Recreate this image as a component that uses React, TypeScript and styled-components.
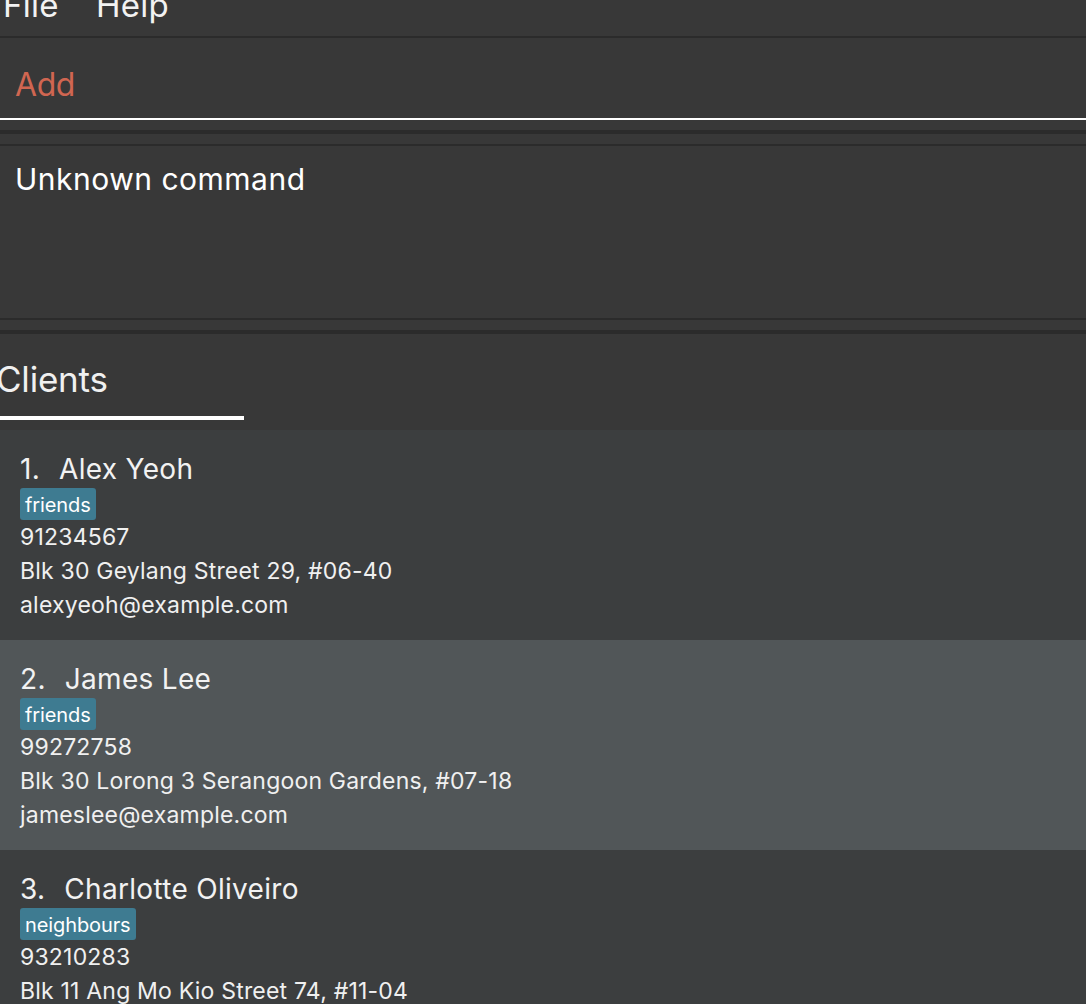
import React from "react";
import styled, { createGlobalStyle } from "styled-components";

const Global = createGlobalStyle`
  html, body { margin: 0; padding: 0; background: #383838; }
  body { font-family: Inter, "Open Sans", sans-serif; color: #ffffff; overflow: hidden; }
  * { box-sizing: border-box; }
`;

const Window = styled.div`
  width: 1086px;
  height: 1004px;
  background: #383838;
  display: flex;
  flex-direction: column;
  overflow: hidden;
  & > * { flex-shrink: 0; }
`;

const MenuBar = styled.div`
  height: 38px;
  display: flex;
  gap: 37px;
  padding-left: 3px;
  border-bottom: 2px solid #2b2b2b;
  overflow: hidden;
`;

const MenuItem = styled.span`
  font-size: 33px;
  line-height: 33px;
  margin-top: -11px;
  letter-spacing: 0.3px;
  color: #f2f2f2;
`;

const CommandBox = styled.div`
  height: 82px;
  display: flex;
  align-items: flex-start;
  padding: 27px 15px 0;
  border-bottom: 2px solid #ffffff;
`;

const CommandText = styled.span<{ $error?: boolean }>`
  font-size: 32px;
  line-height: 40px;
  letter-spacing: -0.4px;
  color: ${(p) => (p.$error ? "#d06651" : "#ffffff")};
`;

const Separator = styled.div<{ $thick?: boolean }>`
  height: ${(p) => (p.$thick ? 4 : 2)}px;
  background: #2b2b2b;
`;

const Gap = styled.div`
  height: 10px;
`;

const ResultDisplay = styled.div`
  height: 172px;
  padding: 15px 15px 0;
  font-size: 30px;
  line-height: 36px;
  letter-spacing: 0.5px;
  color: #ffffff;
`;

const ListPanel = styled.div`
  flex: 1;
  display: flex;
  flex-direction: column;
  min-height: 0;
`;

const ListHeader = styled.div`
  height: 96px;
  padding-top: 25px;
  display: flex;
  flex-direction: column;
  flex-shrink: 0;
`;

const HeaderTitle = styled.div`
  font-size: 35px;
  line-height: 40px;
  letter-spacing: -0.2px;
  margin-left: -4px;
  color: #f0f0f0;
`;

const HeaderUnderline = styled.div`
  width: 244px;
  height: 4px;
  margin-top: 17px;
  background: #ffffff;
`;

const CardList = styled.div`
  display: flex;
  flex-direction: column;
  background: #3c3e3f;
  flex: 1;
  & > * { flex-shrink: 0; }
`;

const Card = styled.div<{ $odd?: boolean }>`
  height: 210px;
  padding: 22px 20px 0;
  background: ${(p) => (p.$odd ? "#515658" : "#3c3e3f")};
  display: flex;
  flex-direction: column;
  align-items: flex-start;
`;

const NameRow = styled.div`
  display: flex;
  gap: 19px;
  font-size: 28px;
  line-height: 34px;
  letter-spacing: 0.3px;
  color: #f2f2f2;
`;

const Tags = styled.div`
  display: flex;
  gap: 6px;
  margin-top: 2px;
`;

const Tag = styled.span`
  background: #3e7b91;
  color: #ffffff;
  font-size: 20px;
  line-height: 32px;
  padding: 1px 5px 0;
  height: 32px;
  border-radius: 3px;
  letter-spacing: -0.1px;
`;

const Detail = styled.div`
  font-size: 23px;
  line-height: 34px;
  letter-spacing: 0.2px;
  color: #f0f0f0;
`;

type Person = {
  name: string;
  tags: string[];
  phone: string;
  address: string;
  email: string;
};

const people: Person[] = [
  {
    name: "Alex Yeoh",
    tags: ["friends"],
    phone: "91234567",
    address: "Blk 30 Geylang Street 29, #06-40",
    email: "alexyeoh@example.com",
  },
  {
    name: "James Lee",
    tags: ["friends"],
    phone: "99272758",
    address: "Blk 30 Lorong 3 Serangoon Gardens, #07-18",
    email: "jameslee@example.com",
  },
  {
    name: "Charlotte Oliveiro",
    tags: ["neighbours"],
    phone: "93210283",
    address: "Blk 11 Ang Mo Kio Street 74, #11-04",
    email: "charlotte@example.com",
  },
];

export default function App() {
  return (
    <Window>
      <Global />
      <MenuBar>
        <MenuItem>File</MenuItem>
        <MenuItem>Help</MenuItem>
      </MenuBar>
      <CommandBox>
        <CommandText $error>Add</CommandText>
      </CommandBox>
      <Gap />
      <Separator $thick />
      <Gap />
      <Separator />
      <ResultDisplay>Unknown command</ResultDisplay>
      <Separator />
      <Gap />
      <Separator $thick />
      <ListPanel>
        <ListHeader>
          <HeaderTitle>Clients</HeaderTitle>
          <HeaderUnderline />
        </ListHeader>
        <CardList>
          {people.map((p, i) => (
            <Card key={p.name} $odd={i % 2 === 1}>
              <NameRow>
                <span>{i + 1}.</span>
                <span>{p.name}</span>
              </NameRow>
              <Tags>
                {p.tags.map((t) => (
                  <Tag key={t}>{t}</Tag>
                ))}
              </Tags>
              <Detail>{p.phone}</Detail>
              <Detail>{p.address}</Detail>
              <Detail>{p.email}</Detail>
            </Card>
          ))}
        </CardList>
      </ListPanel>
    </Window>
  );
}
